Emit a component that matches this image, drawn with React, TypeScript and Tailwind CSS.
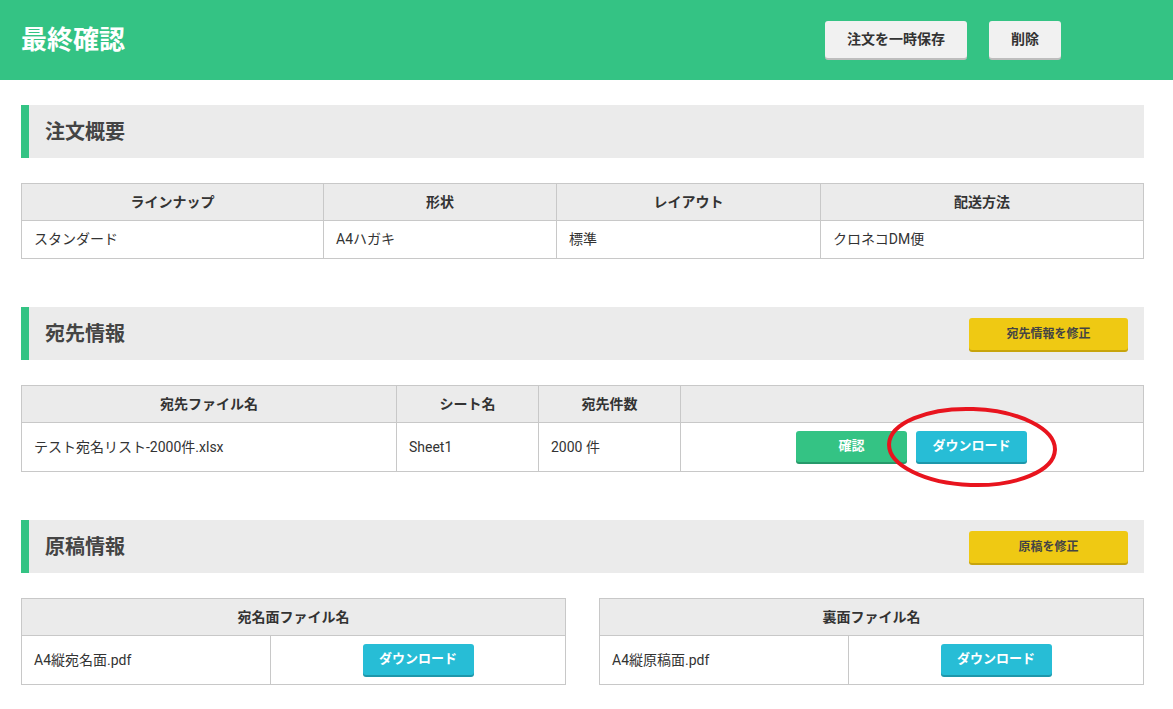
import React from "react";

const font = { fontFamily: 'Roboto, "Noto Sans CJK JP", sans-serif' };

function SectionHeader({ title, action }: { title: string; action?: string }) {
  return (
    <div className="flex h-[53px] items-center justify-between border-l-[8px] border-[#34c384] bg-[#ebebeb] pl-4 pr-4">
      <h2 className="text-[20px] font-bold text-[#444]">{title}</h2>
      {action && (
        <button className="h-[32px] w-[159px] rounded-[3px] bg-[#efc913] text-[12px] font-bold text-[#444] shadow-[0_2px_0_#c7a40c]">
          {action}
        </button>
      )}
    </div>
  );
}

function Btn({ label, color }: { label: string; color: "green" | "blue" }) {
  const cls =
    color === "green"
      ? "bg-[#34c384] shadow-[0_2px_0_#27996a]"
      : "bg-[#27bdd6] shadow-[0_2px_0_#1e97ab]";
  return (
    <button className={`h-[31px] w-[111px] rounded-[3px] text-[13px] font-bold text-white ${cls}`}>
      {label}
    </button>
  );
}

const th = "h-[37px] border border-[#c8c8c8] bg-[#ebebeb] text-center text-[14px] font-bold text-[#333]";
const td = "border border-[#c8c8c8] px-3 text-left text-[14px] text-[#333]";

export default function App() {
  return (
    <div className="min-h-screen bg-white pb-10" style={font}>
      {/* ヘッダー */}
      <header className="flex h-[80px] items-center justify-between bg-[#34c384] pl-[21px] pr-[112px]">
        <h1 className="text-[26px] font-bold text-white">最終確認</h1>
        <div className="flex gap-[22px] pb-[1px]">
          <button className="h-[37px] w-[142px] rounded-[3px] bg-[#f1f1f1] text-[14px] font-bold text-[#333] shadow-[0_2px_0_#bdbdbd]">
            注文を一時保存
          </button>
          <button className="h-[37px] w-[72px] rounded-[3px] bg-[#f1f1f1] text-[14px] font-bold text-[#333] shadow-[0_2px_0_#bdbdbd]">
            削除
          </button>
        </div>
      </header>

      <main className="ml-[21px] w-[1123px] pt-[25px]">
        {/* 注文概要 */}
        <SectionHeader title="注文概要" />
        <table className="mt-[25px] w-full border-collapse">
          <thead>
            <tr>
              <th className={`${th} w-[302px]`}>ラインナップ</th>
              <th className={`${th} w-[233px]`}>形状</th>
              <th className={`${th} w-[264px]`}>レイアウト</th>
              <th className={th}>配送方法</th>
            </tr>
          </thead>
          <tbody>
            <tr className="h-[38px]">
              <td className={td}>スタンダード</td>
              <td className={td}>A4ハガキ</td>
              <td className={td}>標準</td>
              <td className={td}>クロネコDM便</td>
            </tr>
          </tbody>
        </table>

        {/* 宛先情報 */}
        <div className="mt-[48px]">
          <SectionHeader title="宛先情報" action="宛先情報を修正" />
        </div>
        <table className="mt-[25px] w-full border-collapse">
          <thead>
            <tr>
              <th className={`${th} w-[375px]`}>宛先ファイル名</th>
              <th className={`${th} w-[142px]`}>シート名</th>
              <th className={`${th} w-[142px]`}>宛先件数</th>
              <th className={th}></th>
            </tr>
          </thead>
          <tbody>
            <tr className="h-[49px]">
              <td className={td}>テスト宛名リスト-2000件.xlsx</td>
              <td className={td}>Sheet1</td>
              <td className={td}>2000 件</td>
              <td className="border border-[#c8c8c8] pl-[115px]">
                <div className="flex items-center gap-[9px] pb-[2px]">
                  <Btn label="確認" color="green" />
                  <div className="relative">
                    <Btn label="ダウンロード" color="blue" />
                    {/* 赤丸 */}
                    <svg
                      className="pointer-events-none absolute left-[-30px] top-[-25px]"
                      width="172"
                      height="84"
                      viewBox="0 0 172 84"
                    >
                      <ellipse cx="86" cy="41" rx="83" ry="38" fill="none" stroke="#e8141e" strokeWidth="4" transform="rotate(2 86 41)" />
                    </svg>
                  </div>
                </div>
              </td>
            </tr>
          </tbody>
        </table>

        {/* 原稿情報 */}
        <div className="mt-[48px]">
          <SectionHeader title="原稿情報" action="原稿を修正" />
        </div>
        <div className="mt-[25px] flex justify-between">
          {[
            { head: "宛名面ファイル名", file: "A4縦宛名面.pdf" },
            { head: "裏面ファイル名", file: "A4縦原稿面.pdf" },
          ].map((t) => (
            <table key={t.head} className="w-[545px] border-collapse">
              <thead>
                <tr>
                  <th colSpan={2} className={th}>
                    {t.head}
                  </th>
                </tr>
              </thead>
              <tbody>
                <tr className="h-[49px]">
                  <td className={`${td} w-[249px]`}>{t.file}</td>
                  <td className="border border-[#c8c8c8] text-center">
                    <div className="flex justify-center pb-[2px]">
                      <Btn label="ダウンロード" color="blue" />
                    </div>
                  </td>
                </tr>
              </tbody>
            </table>
          ))}
        </div>
      </main>
    </div>
  );
}
